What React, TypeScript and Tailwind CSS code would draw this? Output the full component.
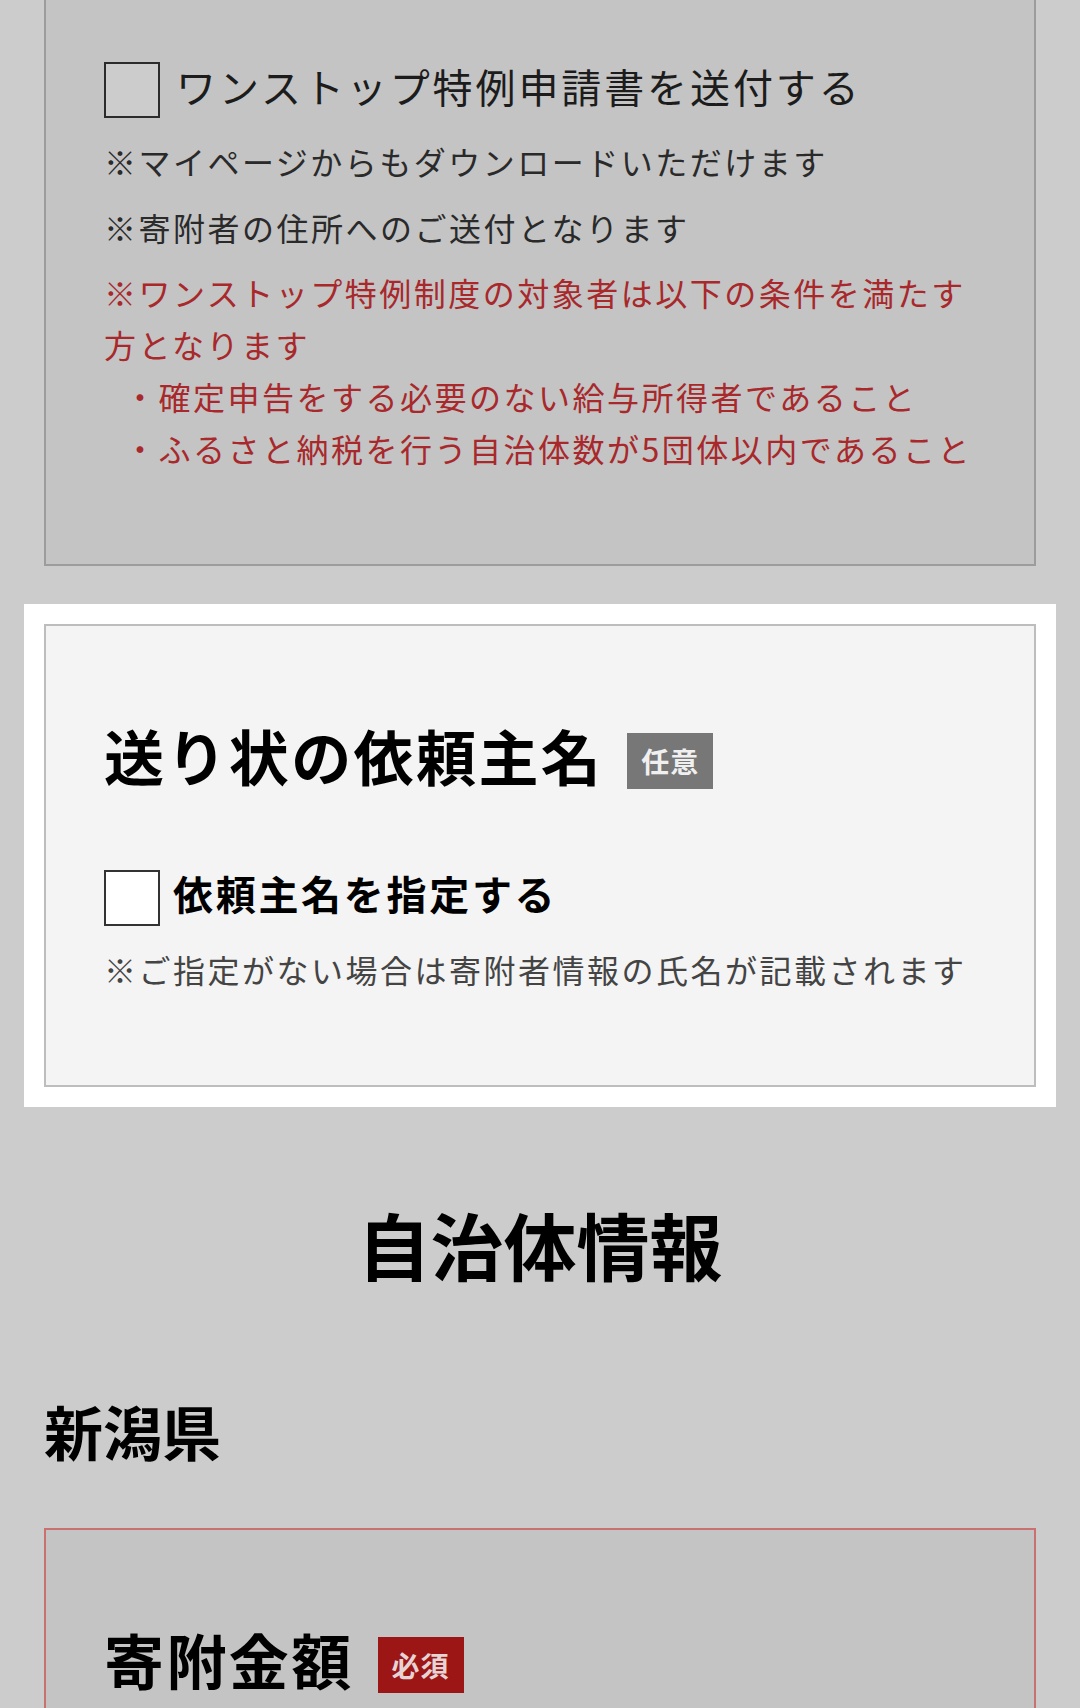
import React from 'react';

const Checkbox = ({ className }: { className: string }) => (
  <span className={`block w-[56px] h-[56px] shrink-0 border-2 ${className}`} />
);

const Badge = ({ label, className }: { label: string; className: string }) => (
  <span
    className={`ml-[24px] mt-[23px] flex h-[56px] w-[86px] shrink-0 items-center justify-center text-[28px] font-bold leading-none tracking-[1px] ${className}`}
  >
    {label}
  </span>
);

export default function App() {
  return (
    <div className="min-h-[1708px] bg-[#cccccc] px-[44px] pb-[120px] font-['Noto_Sans_CJK_JP',sans-serif] text-[#111]">
      {/* ワンストップ特例 (dimmed) */}
      <section className="border-x-2 border-b-2 border-[#9c9c9c] bg-[#c4c4c4] px-[58px] pt-[62px] pb-[90px]">
        <label className="flex h-[56px] items-center gap-[16px]">
          <Checkbox className="border-[#2b2b2b] bg-[#cccccc]" />
          <span className="mb-[8px] text-[40px] leading-[48px] tracking-[2.9px] text-[#1c1c1c]">
            ワンストップ特例申請書を送付する
          </span>
        </label>
        <div className="mt-[17px] text-[32px] leading-[52px] tracking-[2.5px] text-[#2a2a2a]">
          <p>※マイページからもダウンロードいただけます</p>
          <p className="mt-[14px]">※寄附者の住所へのご送付となります</p>
          <div className="mt-[13px] text-[#a8282b]">
            <p>※ワンストップ特例制度の対象者は以下の条件を満たす方となります</p>
            <ul className="whitespace-nowrap pl-[20px]">
              <li>・確定申告をする必要のない給与所得者であること</li>
              <li>・ふるさと納税を行う自治体数が5団体以内であること</li>
            </ul>
          </div>
        </div>
      </section>

      {/* 送り状の依頼主名 (highlighted) */}
      <div className="-mx-[20px] mt-[38px] bg-white p-[20px]">
        <section className="border-2 border-[#bdbdbd] bg-[#f4f4f4] px-[58px] pt-[84px] pb-[90px]">
          <div className="flex items-start">
            <h2 className="text-[60px] font-bold leading-[90px] tracking-[2.4px] text-black">
              送り状の依頼主名
            </h2>
            <Badge label="任意" className="bg-[#777777] text-[#f0f0f0]" />
          </div>
          <label className="mt-[70px] flex h-[56px] items-center gap-[13px]">
            <Checkbox className="border-[#333] bg-white" />
            <span className="mb-[10px] text-[40px] font-bold leading-[46px] tracking-[2.7px] text-black">
              依頼主名を指定する
            </span>
          </label>
          <p className="mt-[17px] whitespace-nowrap text-[32px] leading-[52px] tracking-[2.5px] text-[#444]">
            ※ご指定がない場合は寄附者情報の氏名が記載されます
          </p>
        </section>
      </div>

      {/* 自治体情報 */}
      <h1 className="mt-[86px] text-center text-[73px] font-bold leading-[100px] text-black">
        自治体情報
      </h1>
      <h3 className="mt-[93px] text-[59px] font-bold leading-[90px] text-black">新潟県</h3>

      <section className="mt-[52px] border-2 border-[#c97070] bg-[#c4c4c4] px-[58px] pt-[84px] pb-[90px]">
        <div className="flex items-start">
          <h2 className="text-[60px] font-bold leading-[90px] tracking-[2.4px] text-black">寄附金額</h2>
          <Badge label="必須" className="bg-[#9d1616] text-[#e6d4d4]" />
        </div>
        <div className="mt-[40px] h-[120px]" />
      </section>
    </div>
  );
}
